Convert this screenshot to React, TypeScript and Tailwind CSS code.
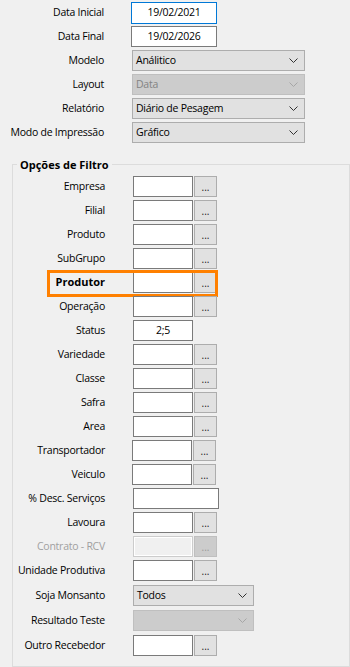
import React from "react"

type Row = {
  label: string
  kind: "lookup" | "text" | "combo"
  value?: string
  w?: number
  bold?: boolean
  disabled?: boolean
  highlight?: boolean
  shift?: boolean
  mt: string
}

const rows: Row[] = [
  { label: "Empresa", kind: "lookup", mt: "mt-0" },
  { label: "Filial", kind: "lookup", mt: "mt-[3px]" },
  { label: "Produto", kind: "lookup", mt: "mt-[3px]" },
  { label: "SubGrupo", kind: "lookup", mt: "mt-[3px]" },
  { label: "Produtor", kind: "lookup", bold: true, highlight: true, mt: "mt-[3px]" },
  { label: "Operação", kind: "lookup", mt: "mt-[3px]" },
  { label: "Status", kind: "text", value: "2;5", mt: "mt-[3px]" },
  { label: "Variedade", kind: "lookup", mt: "mt-[3px]" },
  { label: "Classe", kind: "lookup", mt: "mt-[3px]" },
  { label: "Safra", kind: "lookup", mt: "mt-[3px]" },
  { label: "Area", kind: "lookup", mt: "mt-[3px]" },
  { label: "Transportador", kind: "lookup", shift: true, mt: "mt-[3px]" },
  { label: "Veiculo", kind: "lookup", shift: true, mt: "mt-[3px]" },
  { label: "% Desc. Serviços", kind: "text", value: "", w: 86, mt: "mt-[3px]" },
  { label: "Lavoura", kind: "lookup", mt: "mt-[3px]" },
  { label: "Contrato - RCV", kind: "lookup", disabled: true, mt: "mt-[3px]" },
  { label: "Unidade Produtiva", kind: "lookup", mt: "mt-[3px]" },
  { label: "Soja Monsanto", kind: "combo", value: "Todos", mt: "mt-[4px]" },
  { label: "Resultado Teste", kind: "combo", value: "", disabled: true, mt: "mt-[4px]" },
  { label: "Outro Recebedor", kind: "lookup", mt: "mt-[4px]" },
]

function Chevron({ disabled }: { disabled?: boolean }) {
  return (
    <svg width="9" height="5" viewBox="0 0 9 5" className="shrink-0">
      <path
        d="M0.5 0.5 L4.5 4.5 L8.5 0.5"
        fill="none"
        stroke={disabled ? "#a6a6a6" : "#333333"}
        strokeWidth="1"
      />
    </svg>
  )
}

function Combo({ value, width, disabled }: { value: string; width: number; disabled?: boolean }) {
  return (
    <div
      style={{ width }}
      className={`h-[21px] flex items-center justify-between pl-[3px] pr-[6px] border ${
        disabled ? "bg-[#cccccc] border-[#bfbfbf] text-[#838383]" : "bg-[#e1e1e1] border-[#adadad] text-black"
      }`}
    >
      <span>{value}</span>
      <Chevron disabled={disabled} />
    </div>
  )
}

function Dots({ disabled }: { disabled?: boolean }) {
  return (
    <div
      className={`w-[23px] h-[21px] ml-[1px] flex items-end justify-center pb-[4px] border leading-none text-[10px] tracking-normal ${
        disabled ? "bg-[#cccccc] border-[#bfbfbf] text-[#9a9a9a]" : "bg-[#e1e1e1] border-[#adadad] text-[#1a1a1a]"
      }`}
    >
      ...
    </div>
  )
}

function FilterRow({ r }: { r: Row }) {
  return (
    <div className={`relative flex items-center h-[21px] ${r.mt}`}>
      <div
        className={`w-[92px] text-right whitespace-nowrap ${r.bold ? "font-bold text-[11px] tracking-normal" : ""} ${
          r.disabled && r.kind === "lookup" ? "text-[#a0a0a0]" : "text-black"
        }`}
      >
        {r.label}
      </div>
      <div className={`flex items-center ${r.shift ? "ml-[27px]" : "ml-[28px]"}`}>
        {r.kind === "combo" ? (
          <Combo value={r.value ?? ""} width={121} disabled={r.disabled} />
        ) : (
          <>
            <div
              style={{ width: r.w ?? 60 }}
              className={`h-[21px] flex items-center justify-center border ${
                r.disabled ? "bg-[#f0f0f0] border-[#cccccc] shadow-[inset_0_0_0_1px_#ffffff]" : "bg-white border-[#7a7a7a]"
              }`}
            >
              {r.value}
            </div>
            {r.kind === "lookup" && <Dots disabled={r.disabled} />}
          </>
        )}
      </div>
      {r.highlight && (
        <div className="absolute left-[34px] top-[-2px] w-[171px] h-[27px] border-[3px] border-[#ff8000] pointer-events-none" />
      )}
    </div>
  )
}

function TopRow({ label, children, mt }: { label: string; children: React.ReactNode; mt: string }) {
  return (
    <div className={`flex items-center ${mt}`}>
      <div className="w-[104px] text-right whitespace-nowrap text-black">{label}</div>
      {children}
    </div>
  )
}

export default function App() {
  return (
    <div className="w-[350px] h-[667px] overflow-hidden bg-[#f0f0f0] font-['Open_Sans','Noto_Sans',sans-serif] text-[10.5px] tracking-[-0.25px] text-black">
      <div className="pt-[2px] flex flex-col">
        <TopRow label="Data Inicial" mt="mt-0">
          <div className="ml-[27px] w-[86px] h-[22px] flex items-center justify-center bg-white border border-[#0078d7]">
            19/02/2021
          </div>
        </TopRow>
        <TopRow label="Data Final" mt="mt-[2px]">
          <div className="ml-[27px] w-[86px] h-[21px] flex items-center justify-center bg-white border border-[#7a7a7a]">
            19/02/2026
          </div>
        </TopRow>
        <TopRow label="Modelo" mt="mt-[3px]">
          <div className="ml-[28px]">
            <Combo value="Análitico" width={173} />
          </div>
        </TopRow>
        <TopRow label="Layout" mt="mt-[3px]">
          <div className="ml-[28px]">
            <Combo value="Data" width={173} disabled />
          </div>
        </TopRow>
        <TopRow label="Relatório" mt="mt-[3px]">
          <div className="ml-[28px]">
            <Combo value="Diário de Pesagem" width={173} />
          </div>
        </TopRow>
        <TopRow label="Modo de Impressão" mt="mt-[3px]">
          <div className="ml-[28px]">
            <Combo value="Gráfico" width={173} />
          </div>
        </TopRow>
      </div>

      <fieldset className="ml-[12px] mt-[14px] w-[338px] border border-[#dcdcdc] pb-[10px]">
        <legend className="ml-[4px] px-[3px] font-bold text-[11px] tracking-normal leading-[15px]">Opções de Filtro</legend>
        <div className="mt-[4px] flex flex-col">
          {rows.map((r) => (
            <FilterRow key={r.label} r={r} />
          ))}
        </div>
      </fieldset>
    </div>
  )
}
